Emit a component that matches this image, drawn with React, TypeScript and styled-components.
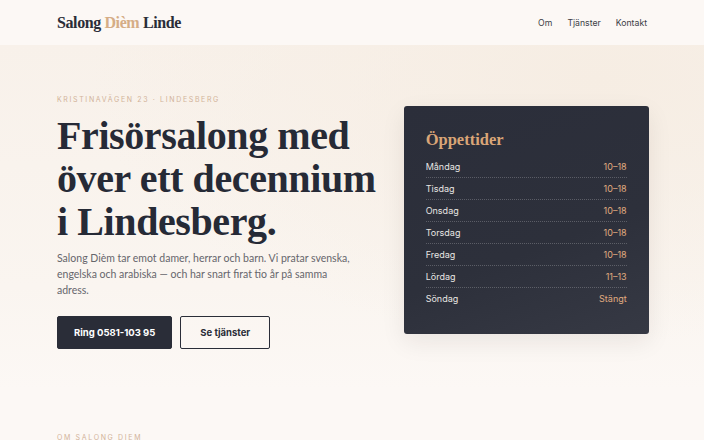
import React from 'react'
import styled, { createGlobalStyle } from 'styled-components'

const GlobalStyle = createGlobalStyle`
    html, body {
        margin: 0;
        padding: 0;
        background: #fcf8f5;
    }
    * {
        box-sizing: border-box;
    }
`

const serif = `"Liberation Serif", "DejaVu Serif", serif`
const sans = `Inter, "Noto Sans", "Liberation Sans", sans-serif`
const text = `Lato, "Noto Sans", "Liberation Sans", sans-serif`

const Page = styled.div`
    width: 704px;
    height: 440px;
    overflow: hidden;
    font-family: ${sans};
    color: #2a2d38;
`

const Container = styled.div`
    width: 590px;
    margin: 0 auto;
`

const Header = styled.header`
    height: 45px;
    background: #fcf8f5;
`

const HeaderInner = styled(Container)`
    height: 100%;
    display: flex;
    align-items: center;
    justify-content: space-between;
`

const Logo = styled.div`
    font-family: ${serif};
    font-weight: 700;
    font-size: 16px;
    letter-spacing: -0.4px;
    color: #2a2d38;

    span {
        color: #d5ad86;
    }
`

const Nav = styled.nav`
    display: flex;
    gap: 15px;
`

const NavLink = styled.a`
    font-size: 8.7px;
    color: #3b3d45;
    text-decoration: none;
`

const Hero = styled.section`
    height: 345px;
    background:
        radial-gradient(ellipse at 85% 10%, #f6ede3 0%, rgba(246, 237, 227, 0) 60%),
        linear-gradient(180deg, #f8f1ea 0%, #faf5f0 70%, #fcf8f5 100%);
`

const HeroGrid = styled(Container)`
    height: 100%;
    display: grid;
    grid-template-columns: 1fr 245px;
    gap: 28px;
    align-items: center;
    padding-top: 8px;
`

const Eyebrow = styled.div`
    font-size: 7px;
    letter-spacing: 1.65px;
    text-transform: uppercase;
    color: #d2b39a;
    margin-bottom: 10px;
`

const Title = styled.h1`
    margin: 0;
    font-family: ${serif};
    font-weight: 700;
    font-size: 40px;
    line-height: 43px;
    letter-spacing: -0.4px;
    color: #262a36;
    white-space: nowrap;
`

const Lead = styled.p`
    margin: 7px 0 0;
    font-family: ${text};
    font-size: 10.5px;
    line-height: 16px;
    color: #66666c;
    max-width: 304px;
`

const Actions = styled.div`
    display: flex;
    gap: 8px;
    margin-top: 18px;
`

const Button = styled.a<{ $variant: 'dark' | 'outline' }>`
    display: inline-flex;
    align-items: center;
    justify-content: center;
    height: 33px;
    padding: 0 ${(p) => (p.$variant === 'dark' ? '16px' : '19px')};
    border-radius: 2px;
    font-size: 9.5px;
    font-weight: 700;
    text-decoration: none;
    background: ${(p) => (p.$variant === 'dark' ? '#2a2d38' : 'transparent')};
    color: ${(p) => (p.$variant === 'dark' ? '#ffffff' : '#2a2d38')};
    border: 1px solid #2a2d38;
`

const HoursCard = styled.aside`
    margin-top: -4px;
    background: linear-gradient(160deg, #2b2e3a 0%, #2d303b 60%, #363944 100%);
    border-radius: 3px;
    padding: 24px 22px 24px;
    box-shadow: 0 8px 24px rgba(40, 30, 20, 0.08);
`

const HoursTitle = styled.h2`
    margin: 0 0 6px;
    font-family: ${serif};
    font-weight: 700;
    font-size: 16.5px;
    color: #d9a577;
`

const HoursRow = styled.div`
    display: flex;
    justify-content: space-between;
    align-items: center;
    height: 22px;
    font-size: 9px;
    color: #e8e6e3;
    border-bottom: 1px dotted rgba(255, 255, 255, 0.22);

    &:last-child {
        border-bottom: none;
    }
`

const HoursTime = styled.span`
    color: #e0ac80;
`

const About = styled(Container)`
    padding-top: 43px;
`

const AboutLabel = styled.div`
    font-size: 7px;
    letter-spacing: 1.65px;
    text-transform: uppercase;
    color: #d2b39a;
`

const hours = [
    ['Måndag', '10–18'],
    ['Tisdag', '10–18'],
    ['Onsdag', '10–18'],
    ['Torsdag', '10–18'],
    ['Fredag', '10–18'],
    ['Lördag', '11–13'],
    ['Söndag', 'Stängt'],
]

export default function App() {
    return (
        <Page>
            <GlobalStyle />
            <Header>
                <HeaderInner>
                    <Logo>
                        Salong <span>Dièm</span> Linde
                    </Logo>
                    <Nav>
                        <NavLink href="#om">Om</NavLink>
                        <NavLink href="#tjanster">Tjänster</NavLink>
                        <NavLink href="#kontakt">Kontakt</NavLink>
                    </Nav>
                </HeaderInner>
            </Header>

            <Hero>
                <HeroGrid>
                    <div>
                        <Eyebrow>Kristinavägen 23 · Lindesberg</Eyebrow>
                        <Title>
                            Frisörsalong med
                            <br />
                            över ett decennium
                            <br />
                            i Lindesberg.
                        </Title>
                        <Lead>
                            Salong Dièm tar emot damer, herrar och barn. Vi pratar svenska, engelska och
                            arabiska — och har snart firat tio år på samma adress.
                        </Lead>
                        <Actions>
                            <Button $variant="dark" href="tel:0581-10395">Ring 0581-103 95</Button>
                            <Button $variant="outline" href="#tjanster">Se tjänster</Button>
                        </Actions>
                    </div>

                    <HoursCard>
                        <HoursTitle>Öppettider</HoursTitle>
                        {hours.map(([day, time]) => (
                            <HoursRow key={day}>
                                <span>{day}</span>
                                <HoursTime>{time}</HoursTime>
                            </HoursRow>
                        ))}
                    </HoursCard>
                </HeroGrid>
            </Hero>

            <About>
                <AboutLabel>Om Salong Diem</AboutLabel>
            </About>
        </Page>
    )
}
